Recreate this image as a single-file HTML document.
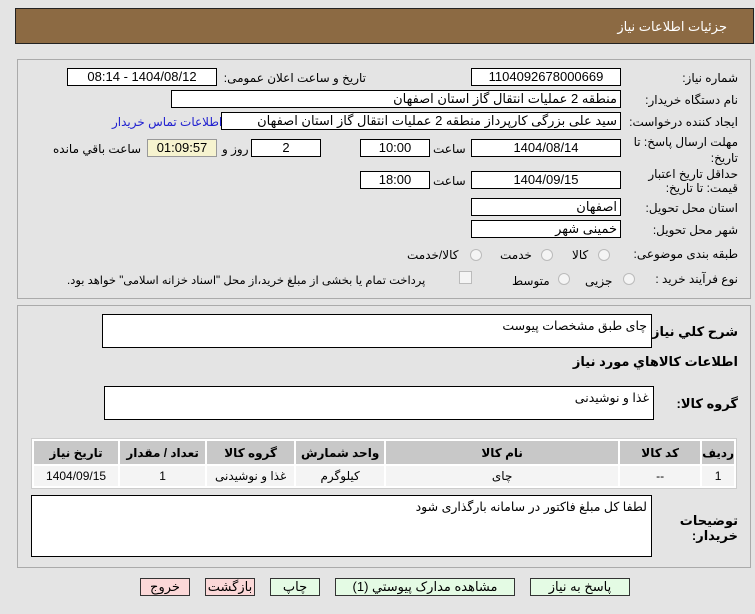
<!DOCTYPE html>
<html><head><meta charset="utf-8"><style>
*{box-sizing:border-box;margin:0;padding:0}
body{width:755px;height:614px;background:#e4e4e4;font-family:"Liberation Sans","DejaVu Sans",sans-serif;font-size:12px;color:#000;position:relative;overflow:hidden;direction:rtl}
.a{position:absolute;white-space:nowrap}
.hdr{left:15px;top:8px;width:739px;height:36px;background:#8c6a43;border:1px solid #222}
.hdr span{position:absolute;right:26px;top:10px;color:#fff;font-size:13px}
.box{left:17px;width:734px;border:1px solid #aaa}
.in{position:absolute;background:#fff;border:1px solid #000;height:18px;font-size:13px;line-height:16px;padding:0 3px;white-space:nowrap}
.c{text-align:center}
.l{font-size:12px}
.ta{position:absolute;background:#fff;border:1px solid #000;font-size:12.5px;padding:3px 4px}
.rad{position:absolute;width:12px;height:12px;border:1px solid #bbb;border-radius:50%;background:#f4f4f4}
table{position:absolute;left:31px;top:438px;width:706px;border-collapse:separate;border-spacing:2px;background:#fff;border:1px solid #ccc}
th{background:#c8c8c8;height:23px;font-size:12px;font-weight:bold}
td{background:#f4f4f4;height:20px;text-align:center;font-size:12px}
.b{position:absolute;top:578px;height:18px;border:1px solid #333;font-size:13px;text-align:center;line-height:16px}
.g{background:#e4fbe4}.p{background:#fbd8d8}
</style></head><body>
<div class="a hdr"><span>جزئیات اطلاعات نیاز</span></div>
<div class="a box" style="top:59px;height:240px"></div>
<div class="a box" style="top:305px;height:263px"></div>

<div class="a l" style="right:17px;top:71px">شماره نیاز:</div>
<div class="in c" style="left:471px;top:68px;width:150px">1104092678000669</div>
<div class="a l" style="right:389px;top:71px">تاریخ و ساعت اعلان عمومی:</div>
<div class="in c" style="left:67px;top:68px;width:150px">1404/08/12 - 08:14</div>

<div class="a l" style="right:17px;top:93px">نام دستگاه خریدار:</div>
<div class="in" style="left:171px;top:90px;width:450px">منطقه 2 عملیات انتقال گاز استان اصفهان</div>

<div class="a l" style="right:17px;top:115px">ایجاد کننده درخواست:</div>
<div class="in" style="left:221px;top:112px;width:400px">سید علی بزرگی کارپرداز منطقه 2 عملیات انتقال گاز استان اصفهان</div>
<div class="a l" style="left:112px;top:115px;color:#2020d0">اطلاعات تماس خریدار</div>

<div class="a l" style="right:17px;top:135px">مهلت ارسال پاسخ: تا</div>
<div class="a l" style="right:17px;top:151px">تاریخ:</div>
<div class="in c" style="left:471px;top:139px;width:150px">1404/08/14</div>
<div class="a l" style="left:433px;top:142px">ساعت</div>
<div class="in c" style="left:360px;top:139px;width:70px">10:00</div>
<div class="in c" style="left:251px;top:139px;width:70px">2</div>
<div class="a l" style="left:222px;top:142px">روز و</div>
<div class="in c" style="left:147px;top:139px;width:70px;background:#f6f3cf;border-color:#999">01:09:57</div>
<div class="a l" style="left:53px;top:142px">ساعت باقي مانده</div>

<div class="a l" style="right:17px;top:167px">حداقل تاریخ اعتبار</div>
<div class="a l" style="right:17px;top:181px">قیمت: تا تاریخ:</div>
<div class="in c" style="left:471px;top:171px;width:150px">1404/09/15</div>
<div class="a l" style="left:433px;top:174px">ساعت</div>
<div class="in c" style="left:360px;top:171px;width:70px">18:00</div>

<div class="a l" style="right:17px;top:201px">استان محل تحویل:</div>
<div class="in" style="left:471px;top:198px;width:150px">اصفهان</div>
<div class="a l" style="right:17px;top:223px">شهر محل تحویل:</div>
<div class="in" style="left:471px;top:220px;width:150px">خمینی شهر</div>

<div class="a l" style="right:17px;top:247px">طبقه بندی موضوعی:</div>
<div class="rad" style="left:598px;top:249px"></div><div class="a l" style="left:572px;top:248px">کالا</div>
<div class="rad" style="left:541px;top:249px"></div><div class="a l" style="left:500px;top:248px">خدمت</div>
<div class="rad" style="left:470px;top:249px"></div><div class="a l" style="left:407px;top:248px">کالا/خدمت</div>

<div class="a l" style="right:17px;top:272px">نوع فرآیند خرید :</div>
<div class="rad" style="left:623px;top:273px"></div><div class="a l" style="left:585px;top:274px">جزیی</div>
<div class="rad" style="left:558px;top:273px"></div><div class="a l" style="left:512px;top:274px">متوسط</div>
<div style="position:absolute;left:459px;top:271px;width:13px;height:13px;border:1px solid #bbb;background:#f4f4f4"></div>
<div class="a l" style="left:67px;top:273px;font-size:11.5px">پرداخت تمام یا بخشی از مبلغ خرید،از محل "اسناد خزانه اسلامی" خواهد بود.</div>

<div class="a l" style="right:17px;top:324px;font-weight:bold;font-size:13px">شرح کلي نیاز:</div>
<div class="ta" style="left:102px;top:314px;width:550px;height:34px">چای طبق مشخصات پیوست</div>
<div class="a l" style="right:17px;top:354px;font-weight:bold;font-size:13px">اطلاعات کالاهاي مورد نیاز</div>
<div class="a l" style="right:17px;top:396px;font-weight:bold;font-size:13px">گروه کالا:</div>
<div class="ta" style="left:104px;top:386px;width:550px;height:34px">غذا و نوشیدنی</div>

<table>
<tr><th style="width:28px">ردیف</th><th style="width:80px">کد کالا</th><th style="width:232px">نام کالا</th><th style="width:88px">واحد شمارش</th><th style="width:87px">گروه کالا</th><th style="width:85px">تعداد / مقدار</th><th>تاریخ نیاز</th></tr>
<tr><td>1</td><td>--</td><td>چای</td><td>کیلوگرم</td><td>غذا و نوشیدنی</td><td>1</td><td>1404/09/15</td></tr>
</table>

<div class="a l" style="right:17px;top:513px;font-weight:bold;font-size:13px">توضیحات</div>
<div class="a l" style="right:17px;top:528px;font-weight:bold;font-size:13px">خریدار:</div>
<div class="ta" style="left:31px;top:495px;width:621px;height:62px">لطفا کل مبلغ فاکتور در سامانه بارگذاری شود</div>

<div class="b g" style="left:530px;width:100px">پاسخ به نیاز</div>
<div class="b g" style="left:335px;width:180px">مشاهده مدارک پیوستي (1)</div>
<div class="b g" style="left:270px;width:50px">چاپ</div>
<div class="b p" style="left:205px;width:50px">بازگشت</div>
<div class="b p" style="left:140px;width:50px">خروج</div>
</body></html>
